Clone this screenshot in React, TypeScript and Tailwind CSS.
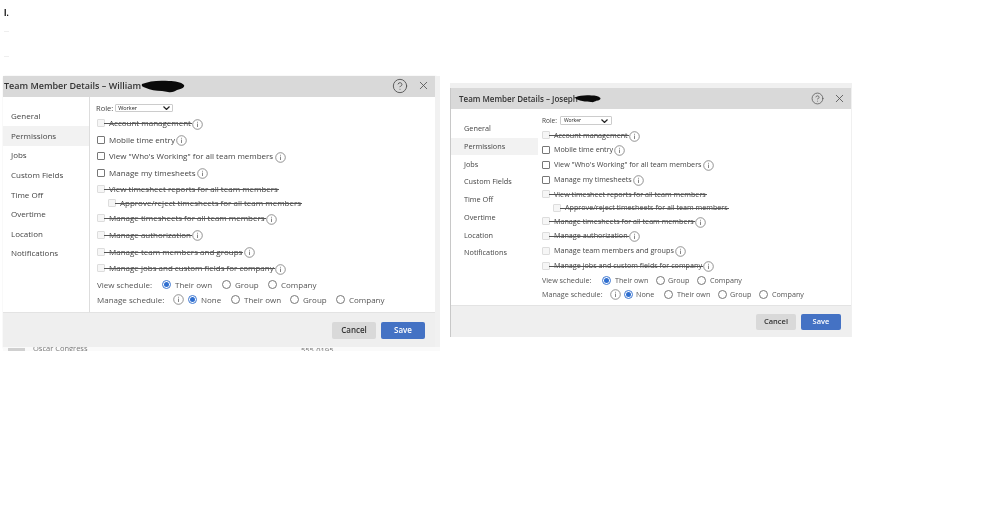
import { CircleHelp, X } from "lucide-react"
import type { ReactNode } from "react"

type Row = { label: string, struck?: boolean, disabled?: boolean, info?: boolean, sub?: boolean, h: string }

const navItems = ["General", "Permissions", "Jobs", "Custom Fields", "Time Off", "Overtime", "Location", "Notifications"]

const rowsLeft: Row[] = [
    { label: "Account management", struck: true, disabled: true, info: true, h: "h-[16px]" },
    { label: "Mobile time entry", info: true, h: "h-[17px]" },
    { label: 'View "Who\'s Working" for all team members', info: true, h: "h-[16px]" },
    { label: "Manage my timesheets", info: true, h: "h-[17px]" },
    { label: "View timesheet reports for all team members", struck: true, disabled: true, h: "h-[15px]" },
    { label: "Approve/reject timesheets for all team members", struck: true, disabled: true, sub: true, h: "h-[14px]" },
    { label: "Manage timesheets for all team members", struck: true, disabled: true, info: true, h: "h-[16px]" },
    { label: "Manage authorization", struck: true, disabled: true, info: true, h: "h-[17px]" },
    { label: "Manage team members and groups", struck: true, disabled: true, info: true, h: "h-[17px]" },
    { label: "Manage jobs and custom fields for company", struck: true, disabled: true, info: true, h: "h-[16px]" },
]

const rowsRight: Row[] = [
    { label: "Account management", struck: true, disabled: true, info: true, h: "h-[14px]" },
    { label: "Mobile time entry", info: true, h: "h-[15px]" },
    { label: 'View "Who\'s Working" for all team members', info: true, h: "h-[15px]" },
    { label: "Manage my timesheets", info: true, h: "h-[15px]" },
    { label: "View timesheet reports for all team members", struck: true, disabled: true, h: "h-[14px]" },
    { label: "Approve/reject timesheets for all team members", struck: true, disabled: true, sub: true, h: "h-[13px]" },
    { label: "Manage timesheets for all team members", struck: true, disabled: true, info: true, h: "h-[14px]" },
    { label: "Manage authorization", struck: true, disabled: true, info: true, h: "h-[15px]" },
    { label: "Manage team members and groups", info: true, disabled: true, h: "h-[15px]" },
    { label: "Manage jobs and custom fields for company", struck: true, disabled: true, info: true, h: "h-[15px]" },
]

const InfoIcon: React.FC<{ className?: string }> = ({ className = "" }) => (
    <svg className={`shrink-0 text-[#777] ${className}`} width="11" height="11" viewBox="0 0 11 11" fill="none" stroke="currentColor">
        <circle cx="5.5" cy="5.5" r="4.8" strokeWidth="0.8" />
        <path d="M5.5 4.6v3.4M5.5 2.8v0.9" strokeWidth="0.9" />
    </svg>
)

const Radio: React.FC<{ checked?: boolean }> = ({ checked = false }) => (
    <span className={`flex h-[9px] w-[9px] shrink-0 items-center justify-center rounded-full border ${checked ? "border-[#3f78d1] bg-white" : "border-[#777] bg-white"}`}>
        {checked && <span className="h-[5px] w-[5px] rounded-full bg-[#2f6fd0]" />}
    </span>
)

const PermissionRow: React.FC<{ row: Row, textClass: string, infoClass: string }> = ({ row, textClass, infoClass }) => (
    <div className={`flex items-center ${row.h} ${row.sub ? "pl-[11px]" : ""}`}>
        <span className={`mr-[4px] h-[8px] w-[8px] shrink-0 rounded-[1px] border ${row.disabled ? "border-[#ddd] bg-[#f6f6f6]" : "border-[#777] bg-white"}`} />
        <span className={`relative whitespace-nowrap ${textClass}`}>
            {row.label}
            {row.struck && <span className="absolute top-[52%] -left-[5px] -right-[1px] h-px bg-[#555]" />}
        </span>
        {row.info && <InfoIcon className={infoClass} />}
    </div>
)

const Scribble: React.FC<{ className: string }> = ({ className }) => (
    <svg className={className} viewBox="0 0 44 14" fill="#0a0a0a">
        <path d="M1 5C8 2 18 1 28 2c6 0 12 1 15 4 1 2-2 4-7 5-2 1-5 3-9 2-2 0-4-1-6-1-6 0-12-1-16-3C2 8 0 7 1 5z" />
    </svg>
)

const Dialog: React.FC<{
    title: string
    scribble: ReactNode
    rows: Row[]
    classes: Record<string, string>
    schedule: ReactNode
}> = ({ title, scribble, rows, classes, schedule }) => (
    <div className={`flex flex-col shrink-0 bg-white ${classes.box}`}>
        <div className={`flex items-center bg-[#d9d9d9] text-[#333] font-semibold ${classes.header}`}>
            <span className="whitespace-nowrap">{title}</span>
            {scribble}
            <CircleHelp className={`text-[#555] ml-auto ${classes.help}`} strokeWidth={1.4} />
            <X className={`text-[#555] ${classes.close}`} strokeWidth={1.6} />
        </div>
        <div className="flex flex-1 min-h-0">
            <div className={`flex flex-col shrink-0 ${classes.side}`}>
                {navItems.map(item => (
                    <div key={item} className={`flex items-center text-[#444] ${classes.nav} ${item === "Permissions" ? "bg-[#f2f2f2]" : ""}`}>
                        {item}
                    </div>
                ))}
            </div>
            <div className={`flex flex-col flex-1 ${classes.main}`}>
                <div className={`flex items-start text-[#444] ${classes.role}`}>
                    <span>Role:</span>
                    <div className={`flex items-center justify-between border border-[#ccc] rounded-[1px] text-[#222] ${classes.select}`}>
                        Worker
                        <svg width="7" height="4" viewBox="0 0 7 4" fill="none" stroke="#222" strokeWidth="1.2"><path d="M0.5 0.5l3 3 3-3" /></svg>
                    </div>
                </div>
                {rows.map(row => <PermissionRow key={row.label} row={row} textClass={classes.text} infoClass={classes.info} />)}
                {schedule}
            </div>
        </div>
        <div className={`flex items-center justify-end bg-[#efefef] border-t border-[#e3e3e3] ${classes.footer}`}>
            <div className={`flex items-center justify-center bg-[#d9d9d9] text-[#333] font-semibold rounded-[2px] ${classes.btn}`}>Cancel</div>
            <div className={`flex items-center justify-center bg-[#4472c4] text-white font-semibold rounded-[2px] ${classes.btn}`}>Save</div>
        </div>
    </div>
)

const leftClasses = {
    box: "w-[432px] h-[271px] shadow-[1px_1px_2px_rgba(0,0,0,0.35)]",
    header: "h-[21px] pl-[1px] pr-[5.5px] pb-[2px] text-[9px]",
    help: "h-[16px] w-[16px] mr-[8.5px]",
    close: "h-[13px] w-[13px]",
    side: "w-[87px] pt-[9.5px] border-r border-[#ddd]",
    nav: "h-[19.6px] pl-[8px] text-[8px]",
    main: "pl-[7px] pt-[7px]",
    role: "h-[11px] gap-[2px] -ml-[1px] text-[7.5px] leading-[9px]",
    select: "h-[8px] w-[58px] px-[2px] text-[5.5px]",
    text: "text-[8px] text-[#444]",
    info: "ml-[1.5px] mt-[2px]",
    footer: "h-[35px] pr-[10px] gap-[5px]",
    btn: "h-[17px] w-[44px] text-[8px]",
}

const rightClasses = {
    box: "w-[401px] h-[249px] border-l border-[#c8c8c8]",
    header: "h-[21px] pl-[8px] pr-[5.5px] text-[8px]",
    help: "h-[13px] w-[13px] mr-[8.5px]",
    close: "h-[13px] w-[13px]",
    side: "w-[87px] pt-[11px]",
    nav: "h-[17.7px] pl-[13px] text-[7.3px]",
    main: "pl-[4px] pt-[7px]",
    role: "h-[12px] gap-[3px] text-[6.5px] leading-[9px]",
    select: "h-[9px] w-[52px] px-[3px] text-[5px]",
    text: "text-[7.2px] text-[#444]",
    info: "ml-[1px] mt-[2px]",
    footer: "h-[32px] pr-[10px] gap-[5px]",
    btn: "h-[16px] w-[40px] text-[7.5px]",
}

const scheduleLeft = (
    <div className="flex flex-col text-[8px] text-[#555] pt-[1px]">
        <div className="flex items-center h-[15px]">
            <span className="w-[65px]">View schedule:</span>
            <Radio checked /><span className="ml-[4px] w-[47px]">Their own</span>
            <Radio /><span className="ml-[4px] w-[33px]">Group</span>
            <Radio /><span className="ml-[4px]">Company</span>
        </div>
        <div className="flex items-center h-[15px]">
            <span className="w-[76px]">Manage schedule:</span>
            <InfoIcon className="mr-[4px]" />
            <Radio checked /><span className="ml-[4px] w-[30px]">None</span>
            <Radio /><span className="ml-[4px] w-[46px]">Their own</span>
            <Radio /><span className="ml-[4px] w-[33px]">Group</span>
            <Radio /><span className="ml-[4px]">Company</span>
        </div>
    </div>
)

const scheduleRight = (
    <div className="flex flex-col text-[7.2px] text-[#555]">
        <div className="flex items-center h-[14px]">
            <span className="w-[60px]">View schedule:</span>
            <Radio checked /><span className="ml-[4px] w-[41px]">Their own</span>
            <Radio /><span className="ml-[3px] w-[29px]">Group</span>
            <Radio /><span className="ml-[4px]">Company</span>
        </div>
        <div className="flex items-center h-[14px]">
            <span className="w-[68px]">Manage schedule:</span>
            <InfoIcon className="mr-[3px]" />
            <Radio checked /><span className="ml-[3px] w-[28px]">None</span>
            <Radio /><span className="ml-[4px] w-[41px]">Their own</span>
            <Radio /><span className="ml-[3px] w-[29px]">Group</span>
            <Radio /><span className="ml-[4px]">Company</span>
        </div>
    </div>
)

export default function App() {
    return (
        <div className="w-[999px] h-[526px] bg-white overflow-hidden font-['Open_Sans',sans-serif] blur-[0.45px]">
            {/* stray marks above the pasted screenshots */}
            <div className="flex h-[76px] flex-col pl-[4px] pt-[10px]">
                <span className="h-[6px] text-[8px] font-bold leading-[6px] text-black">l.</span>
                <span className="mt-[15px] h-px w-[5px] bg-[#eee]" />
                <span className="mt-[24px] h-px w-[5px] bg-[#eee]" />
            </div>
            <div className="flex items-start">
                {/* first pasted screenshot */}
                <div className="ml-[3px] flex shrink-0 flex-col">
                    <div className="flex">
                        <Dialog
                            title="Team Member Details – William"
                            scribble={<Scribble className="w-[44px] h-[14px] ml-0" />}
                            rows={rowsLeft}
                            classes={leftClasses}
                            schedule={scheduleLeft}
                        />
                        <div className="w-[5px] bg-[#f1f1f1]" />
                    </div>
                    <div className="flex h-[4px] items-start overflow-hidden text-[7.5px] leading-[6px] text-[#777] bg-[#fafafa]">
                        <span className="ml-[5px] mt-[1px] h-[3px] w-[17px] bg-[#d0d0d0]" />
                        <span className="ml-[8px] w-[268px] -mt-[2px]">Oscar Congress</span>
                        <span className="mt-0">555-0195</span>
                    </div>
                </div>
                {/* second pasted screenshot */}
                <div className="ml-[10px] mt-[7px] flex shrink-0 flex-col bg-[#f0f0f0] pt-[5px] pr-px">
                    <Dialog
                        title="Team Member Details – Joseph"
                        scribble={<Scribble className="w-[26px] h-[11px] -ml-[3px]" />}
                        rows={rowsRight}
                        classes={rightClasses}
                        schedule={scheduleRight}
                    />
                </div>
            </div>
        </div>
    )
}
